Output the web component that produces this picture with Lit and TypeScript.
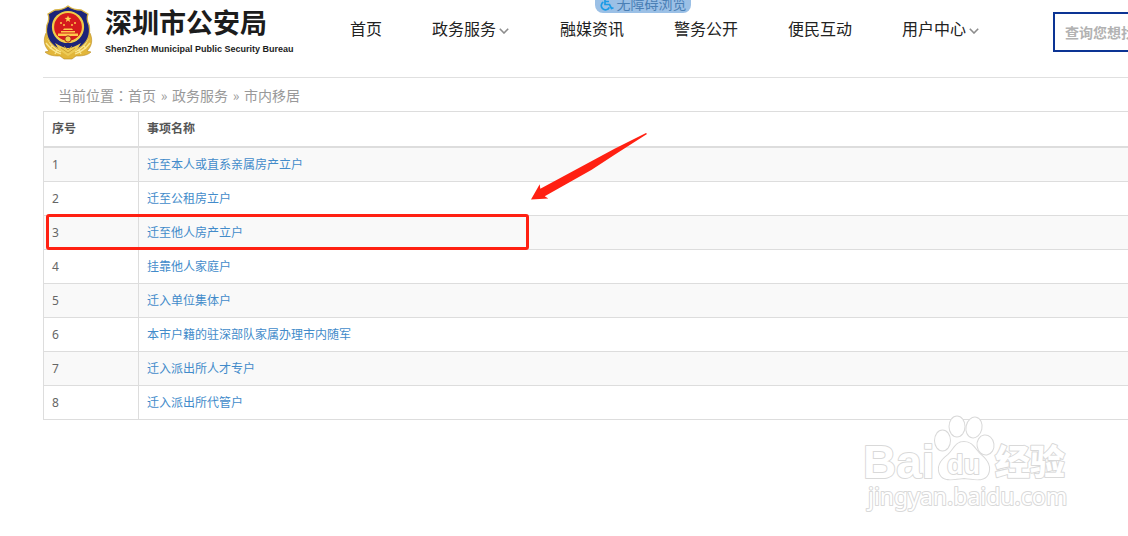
import { LitElement, html, css } from "lit";
import { customElement } from "lit/decorators.js";

interface NavItem {
  label: string;
  menu?: boolean;
}

const NAV: NavItem[] = [
  { label: "首页" },
  { label: "政务服务", menu: true },
  { label: "融媒资讯" },
  { label: "警务公开" },
  { label: "便民互动" },
  { label: "用户中心", menu: true },
];

const ITEMS = [
  "迁至本人或直系亲属房产立户",
  "迁至公租房立户",
  "迁至他人房产立户",
  "挂靠他人家庭户",
  "迁入单位集体户",
  "本市户籍的驻深部队家属办理市内随军",
  "迁入派出所人才专户",
  "迁入派出所代管户",
];

const STAR = "M0-3.6 .9-1.2 3.4-1.1 1.4.4 2.1 2.9 0 1.5-2.1 2.9-1.4.4-3.4-1.1-.9-1.2Z";

@customElement("police-badge")
class PoliceBadge extends LitElement {
  static styles = css`
    :host {
      display: block;
      flex: none;
      width: 50px;
      height: 55px;
    }
    svg {
      display: block;
      width: 100%;
      height: 100%;
    }
  `;

  render() {
    return html`<svg viewBox="0 0 50 55" aria-hidden="true">
      <path d="M3 28C0 35 1 41 6 46L2 47C6 51 13 51 17 51L21 54H29L33 51C37 51 44 51 48 47L44 46C49 41 50 35 47 28L25 38Z" fill="#e2b63a" stroke="#b98a1e" stroke-width=".6" />
      <path d="M5 34Q9 43 18 47M3 38Q9 46 18 49M45 34Q41 43 32 47M47 38Q41 46 32 49M9 41L7 44M41 41L43 44M14 45L12 49M36 45L38 49" fill="none" stroke="#fae894" stroke-width="1.3" />
      <path d="M25 1Q30 5 38 5L45 9Q43 14 46 20Q49 35 36 43L25 50L14 43Q1 35 4 20Q7 14 5 9L12 5Q20 5 25 1Z" fill="#1c2479" stroke="#d9b545" stroke-width="1.3" />
      <path d="M12 38Q20 43 25 43T38 38L34 45 25 51 16 45Z" fill="#edcb55" />
      <path d="M18 43L25 48L32 43M21 41L25 45L29 41" fill="none" stroke="#c4962a" stroke-width=".8" />
      <circle cx="25" cy="22" r="15" fill="#d51b1d" stroke="#efcc48" stroke-width="2.2" />
      <path d=${STAR} transform="translate(25 14)" fill="#ffd653" />
      <g fill="#ffc94a">
        <circle cx="18" cy="18" r="1" /><circle cx="21" cy="20" r="1" />
        <circle cx="29" cy="20" r="1" /><circle cx="32" cy="18" r="1" />
        <path d="M20 25H30L29 23.500H21ZM18 27.500H32V26H18ZM15 31H35V28.500H15Z" />
      </g>
      <circle cx="25" cy="34" r="3.2" fill="#f1cf4d" stroke="#a7261b" />
      <path d="M13 31Q17 36 21 36M37 31Q33 36 29 36" fill="none" stroke="#f1cf4d" stroke-width="1.6" />
    </svg>`;
  }
}

@customElement("site-header")
class SiteHeader extends LitElement {
  static styles = css`
    :host {
      display: block;
    }
    .bar {
      display: flex;
      align-items: flex-start;
      height: 77px;
      border-bottom: 1px solid #e0e0e0;
    }
    .brand {
      display: flex;
      flex: none;
      gap: 12px;
      width: 307px;
      padding-top: 5px;
      color: #1c1c1c;
      text-decoration: none;
    }
    .brand-text {
      display: flex;
      flex-direction: column;
    }
    .brand-name {
      font-size: 27px;
      line-height: 36px;
      font-weight: 700;
    }
    .brand-en {
      font-family: "Liberation Sans", Arial, sans-serif;
      font-size: 9px;
      line-height: 16px;
      font-weight: 700;
      white-space: nowrap;
    }
    .nav {
      display: flex;
      flex: none;
      gap: 50px;
      padding-top: 17px;
    }
    .nav a {
      display: flex;
      align-items: center;
      color: #222;
      font-size: 16px;
      line-height: 24px;
      text-decoration: none;
      white-space: nowrap;
    }
    .chevron {
      width: 10px;
      height: 6px;
      margin: 3px 1px 0 3px;
    }
    .search {
      flex: none;
      box-sizing: border-box;
      width: 240px;
      height: 40px;
      margin: 12px 0 0 73px;
      padding: 0 10px;
      border: 2px solid #0c3494;
      border-radius: 0;
      background: #fff;
      color: #333;
      font: 700 14px/20px "Noto Sans CJK SC", sans-serif;
    }
    .search::placeholder {
      color: #b2b2b2;
      opacity: 1;
    }
  `;

  render() {
    return html`<header class="bar">
      <a class="brand" href="#">
        <police-badge></police-badge>
        <span class="brand-text">
          <span class="brand-name">深圳市公安局</span>
          <span class="brand-en">ShenZhen Municipal Public Security Bureau</span>
        </span>
      </a>
      <nav class="nav">
        ${NAV.map(
          (n) => html`<a href="#">${n.label}${n.menu
            ? html`<svg class="chevron" viewBox="0 0 10 6" aria-hidden="true">
                <path d="M.8.8 5 5 9.2.8" fill="none" stroke="#8c8c8c" stroke-width="1.6" />
              </svg>`
            : ""}</a>`
        )}
      </nav>
      <input class="search" type="search" aria-label="搜索" placeholder="查询您想找的内容" />
    </header>`;
  }
}

@customElement("item-table")
class ItemTable extends LitElement {
  static styles = css`
    :host {
      display: block;
    }
    .table {
      width: 100%;
      border-collapse: collapse;
      table-layout: fixed;
      color: #666;
      font-size: 12px;
      line-height: 17px;
      border: 1px solid #ddd;
      border-right: 0;
    }
    .no {
      width: 95px;
    }
    th,
    td {
      box-sizing: border-box;
      height: 34px;
      padding: 8px;
      border: 1px solid #ddd;
      border-right: 0;
      text-align: left;
      vertical-align: middle;
    }
    th {
      height: 35px;
      border-bottom-width: 2px;
      color: #555;
      font-weight: 700;
    }
    tbody tr:nth-child(odd) {
      background: #f9f9f9;
    }
    td a {
      color: #428bca;
      text-decoration: none;
    }
  `;

  render() {
    return html`<table class="table">
      <thead>
        <tr><th class="no" scope="col">序号</th><th scope="col">事项名称</th></tr>
      </thead>
      <tbody>
        ${ITEMS.map((t, i) => html`<tr><td>${i + 1}</td><td><a href="#">${t}</a></td></tr>`)}
      </tbody>
    </table>`;
  }
}

@customElement("app-root")
class AppRoot extends LitElement {
  static styles = css`
    :host {
      display: block;
      position: relative;
      min-height: 100vh;
      overflow: hidden;
      background: #fff;
      font-family: "Noto Sans", "Noto Sans CJK SC", sans-serif;
    }
    .page {
      padding-left: 43px;
    }
    .crumbs {
      display: flex;
      padding: 7px 15px 6px;
      color: #999;
      font-size: 14px;
      line-height: 20px;
      font-family: "Noto Sans CJK SC", sans-serif;
    }
    .crumbs a {
      color: inherit;
      text-decoration: none;
    }
    .colon {
      font-family: "Noto Sans CJK TC", sans-serif;
    }
    .sep {
      width: 16px;
      text-align: center;
    }
    .access {
      position: absolute;
      top: -9px;
      left: 595px;
      display: flex;
      align-items: center;
      justify-content: center;
      gap: 3px;
      width: 96px;
      height: 22px;
      padding: 2px 0 0;
      border: 0;
      border-radius: 8px;
      background: #9bc0e6;
      color: #4a7fb5;
      font: 14px/20px "Noto Sans CJK SC", sans-serif;
      white-space: nowrap;
    }
    .access svg {
      width: 14px;
      height: 16px;
    }
    .mark {
      position: absolute;
      top: 214px;
      left: 46px;
      box-sizing: border-box;
      width: 483px;
      height: 36px;
      border: 3px solid #ff2012;
      border-radius: 3px;
      pointer-events: none;
    }
    .arrow {
      position: absolute;
      top: 130px;
      left: 529px;
      width: 120px;
      height: 72px;
      pointer-events: none;
    }
    .watermark {
      position: absolute;
      top: 410px;
      left: 860px;
      width: 216px;
      height: 106px;
      pointer-events: none;
    }
    .wm {
      fill: #fff;
      stroke: #d9d9d9;
      stroke-width: 2px;
      paint-order: stroke;
      stroke-linejoin: round;
    }
    .wm-latin {
      font: 700 46px "Liberation Sans", Arial, sans-serif;
    }
    .wm-du {
      font: 700 27px "Liberation Sans", Arial, sans-serif;
    }
    .wm-cjk {
      font: 900 35px "Noto Sans CJK SC", sans-serif;
    }
    .wm-url {
      font: 23px "Noto Sans", sans-serif;
    }
  `;

  render() {
    return html`
      <div class="page">
        <site-header></site-header>
        <nav class="crumbs" aria-label="当前位置">
          <span>当前位置</span><span class="colon">：</span><a href="#">首页</a><span class="sep">»</span><a href="#">政务服务</a><span class="sep">»</span><a href="#">市内移居</a>
        </nav>
        <item-table></item-table>
      </div>
      <button class="access" type="button">
        <svg viewBox="0 0 14 16" fill="none" stroke="#1b9be6" stroke-width="1.7" aria-hidden="true">
          <circle cx="5" cy="2" r="1" fill="#1b9be6" />
          <path d="M5 4V9.500H9.500L11.500 13.500 13.500 12.800M5 6.500H9M3.400 7A4.200 4.200 0 1 0 9.300 12.400" />
        </svg>
        无障碍浏览
      </button>
      <div class="mark"></div>
      <svg class="arrow" viewBox="0 0 120 72" aria-hidden="true">
        <path d="M2 69.500 10.700 54.300 11.300 58.700 86 18.500 117 3 118 4 86 24.500 62.700 39.700 15.700 66.300 19.300 68.500Z" fill="#ff2012" />
      </svg>
      <svg class="watermark" viewBox="0 0 216 106" aria-hidden="true">
        <text class="wm wm-latin" x="3" y="68">Bai</text>
        <g class="wm">
          <ellipse cx="82.500" cy="30.500" rx="7.500" ry="10" />
          <ellipse cx="97" cy="16.500" rx="7.500" ry="10" />
          <ellipse cx="114" cy="17.500" rx="7.500" ry="10" transform="rotate(12 114 17.500)" />
          <ellipse cx="125.500" cy="35" rx="8" ry="9.500" transform="rotate(-8 125.500 35)" />
          <path d="M104 32C95 32 94 40 88 45 80 51 77 57 80 64 84 72 94 69 104 68 114 69 124 72 128 64 131 57 128 51 121 45 115 40 113 32 104 32Z" />
        </g>
        <text class="wm wm-du" x="87" y="64">du</text>
        <text class="wm wm-cjk" x="135" y="65">经验</text>
        <text class="wm wm-url" x="8" y="95">jingyan.baidu.com</text>
      </svg>
    `;
  }
}
